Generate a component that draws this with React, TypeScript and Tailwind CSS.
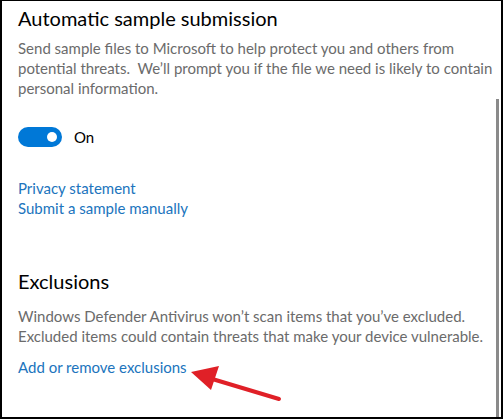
export default function App() {
  return (
    <div className="relative w-[503px] h-[419px] bg-white border-2 border-t border-black flex overflow-hidden font-['Lato','Noto_Sans',sans-serif]">
      <div className="flex-1 pl-4 pt-[3px] whitespace-nowrap">
        <h2 className="text-[20px] leading-[28px] text-black">Automatic sample submission</h2>
        <p className="mt-[6px] text-[15px] leading-[20px] text-[#6b6b6b]">
          Send sample files to Microsoft to help protect you and others from
          <br />
          potential threats.&nbsp; We’ll prompt you if the file we need is likely to contain
          <br />
          personal information.
        </p>

        <div className="mt-[28px] flex items-center gap-3">
          <div className="w-[44px] h-[20px] rounded-full bg-[#0078d7] flex items-center justify-end pr-[5px]">
            <div className="w-[10px] h-[10px] rounded-full bg-white" />
          </div>
          <span className="text-[15px] text-black">On</span>
        </div>

        <div className="mt-[29px] flex flex-col text-[15px] leading-[20px] text-[#2074bd]">
          <a>Privacy statement</a>
          <a>Submit a sample manually</a>
        </div>

        <h2 className="mt-[49px] text-[20px] leading-[28px] text-black">Exclusions</h2>
        <p className="mt-[11px] text-[15px] leading-[20px] text-[#6b6b6b]">
          Windows Defender Antivirus won’t scan items that you’ve excluded.
          <br />
          Excluded items could contain threats that make your device vulnerable.
        </p>
        <a className="block mt-[11px] text-[15px] leading-[20px] text-[#2074bd]">Add or remove exclusions</a>
      </div>

      <div className="w-[5px] flex flex-col">
        <div className="h-[98px]" />
        <div className="flex-1 w-[3px] bg-[#8a8a8a]" />
      </div>

      <svg className="absolute left-[185px] top-[360px]" width="100" height="45" viewBox="0 0 100 45">
        <line x1="92" y1="38" x2="22" y2="17" stroke="#e02027" strokeWidth="4" strokeLinecap="round" />
        <polygon points="4,11 32,5 24,29" fill="#e02027" />
      </svg>
    </div>
  );
}
